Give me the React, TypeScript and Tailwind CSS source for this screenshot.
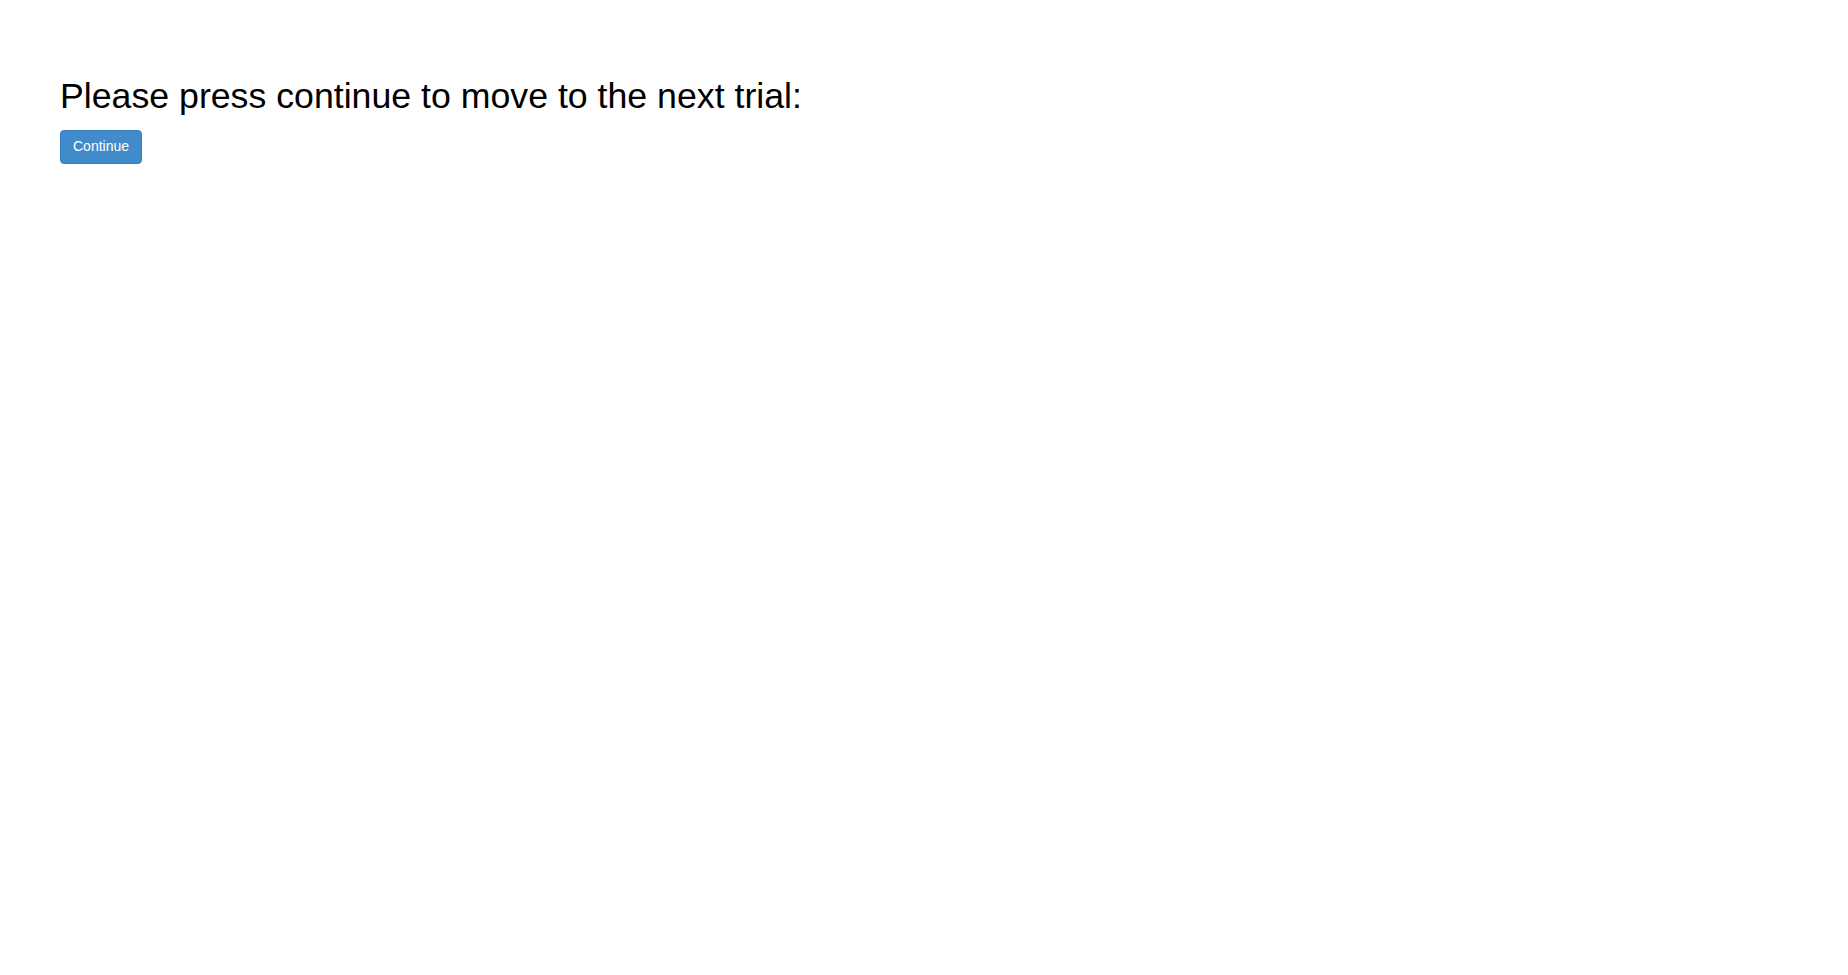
import React from "react";

export default function App() {
  return (
    <div
      className="min-h-[975px] bg-white pl-[60px] pt-[77px] text-black"
      style={{ fontFamily: '"Liberation Sans", Arial, Helvetica, sans-serif' }}
    >
      <h1 className="text-[35.7px] font-normal leading-[39.6px]">
        Please press continue to move to the next trial:
      </h1>
      <button
        type="button"
        className="mt-[13px] flex h-[34px] items-center rounded-[4px] border border-[#357ebd] bg-[#428bca] px-[12px] pb-[2px] text-[14px] leading-[20px] text-white"
      >
        Continue
      </button>
    </div>
  );
}
